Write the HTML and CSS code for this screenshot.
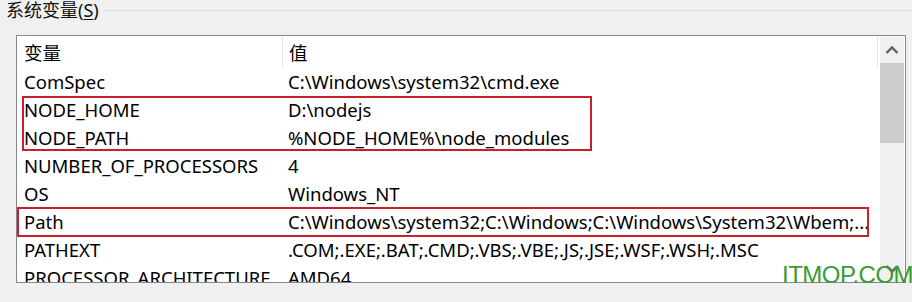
FILE: index.html
```html
<!DOCTYPE html>
<html>
<head>
<meta charset="utf-8">
<link rel="stylesheet" href="styles.css">
</head>
<body>
<div class="frame">
  <div class="legend-row">
    <span class="legend">系统变量(<u>S</u>)</span>
    <span class="legend-line"></span>
  </div>
  <div class="listbox">
    <div class="list">
      <div class="row header">
        <div class="c1">变量</div>
        <div class="c2">值</div>
      </div>
      <div class="row"><div class="c1">ComSpec</div><div class="c2">C:\Windows\system32\cmd.exe</div></div>
      <div class="row"><div class="c1">NODE_HOME</div><div class="c2">D:\nodejs</div></div>
      <div class="row"><div class="c1">NODE_PATH</div><div class="c2">%NODE_HOME%\node_modules</div></div>
      <div class="row"><div class="c1">NUMBER_OF_PROCESSORS</div><div class="c2">4</div></div>
      <div class="row"><div class="c1">OS</div><div class="c2">Windows_NT</div></div>
      <div class="row"><div class="c1">Path</div><div class="c2">C:\Windows\system32;C:\Windows;C:\Windows\System32\Wbem;...</div></div>
      <div class="row"><div class="c1">PATHEXT</div><div class="c2">.COM;.EXE;.BAT;.CMD;.VBS;.VBE;.JS;.JSE;.WSF;.WSH;.MSC</div></div>
      <div class="row"><div class="c1">PROCESSOR_ARCHITECTURE</div><div class="c2">AMD64</div></div>
      <div class="mark mark-node"></div>
      <div class="mark mark-path"></div>
    </div>
    <div class="scrollbar">
      <div class="arrow">
        <svg width="14" height="10" viewBox="0 0 14 10"><path d="M1.5 8 L7 2.5 L12.5 8" fill="none" stroke="#606060" stroke-width="2.4"/></svg>
      </div>
      <div class="thumb"></div>
      <div class="track"></div>
      <div class="arrow down">
        <svg width="14" height="10" viewBox="0 0 14 10"><path d="M1.5 2 L7 7.5 L12.5 2" fill="none" stroke="#606060" stroke-width="2.4"/></svg>
      </div>
    </div>
  </div>
  <div class="watermark">ITMOP.COM</div>
</div>
</body>
</html>
```
FILE: styles.css
```css
html, body {
  margin: 0;
  padding: 0;
  background: #f0f0f0;
}
.frame {
  position: relative;
  width: 912px;
  height: 302px;
  overflow: hidden;
  font-family: "Noto Sans", "Noto Sans CJK SC", sans-serif;
  color: #000;
}
.legend-row {
  display: flex;
  align-items: center;
  height: 20px;
  padding-left: 6px;
}
.legend {
  font-size: 18px;
  line-height: 20px;
  color: #111;
  white-space: nowrap;
  padding-right: 4px;
}
.legend u {
  text-decoration-thickness: 1px;
  text-underline-offset: 2px;
}
.legend-line {
  flex: 1;
  height: 1px;
  background: #dcdcdc;
}
.listbox {
  display: flex;
  margin: 15px 0 0 16px;
  width: 888px;
  height: 246px;
  border: 1px solid #82878f;
  background: #fff;
}
.list {
  position: relative;
  flex: 1;
  overflow: hidden;
  padding-top: 1px;
}
.row {
  display: flex;
  height: 28px;
  align-items: center;
  font-size: 18.5px;
  white-space: nowrap;
}
.row.header {
  height: 30px;
}
.c1 {
  width: 258px;
  padding-left: 7px;
  flex: none;
}
.c2 {
  padding-left: 6px;
}
.header .c2 {
  border-left: 1px solid #e5e5e5;
  height: 30px;
  display: flex;
  align-items: center;
  flex: 1;
  border-right: 1px solid #e5e5e5;
}
.mark {
  position: absolute;
  border: 2px solid #c8202a;
}
.mark-node {
  left: 5px;
  top: 60px;
  width: 566px;
  height: 51px;
}
.mark-path {
  left: 0;
  top: 171px;
  width: 848px;
  height: 26px;
}
.scrollbar {
  width: 24px;
  margin: 1px 1px 0 2px;
  display: flex;
  flex-direction: column;
  background: #f0f0f0;
}
.arrow {
  height: 26px;
  display: flex;
  align-items: center;
  justify-content: center;
  flex: none;
}
.thumb {
  height: 80px;
  background: #cdcdcd;
  flex: none;
}
.track {
  flex: 1;
}
.watermark {
  position: absolute;
  left: 782px;
  top: 263px;
  font-family: "Liberation Sans", Arial, sans-serif;
  font-size: 24px;
  line-height: 24px;
  color: #3a9a34;
  letter-spacing: -0.5px;
}
```
